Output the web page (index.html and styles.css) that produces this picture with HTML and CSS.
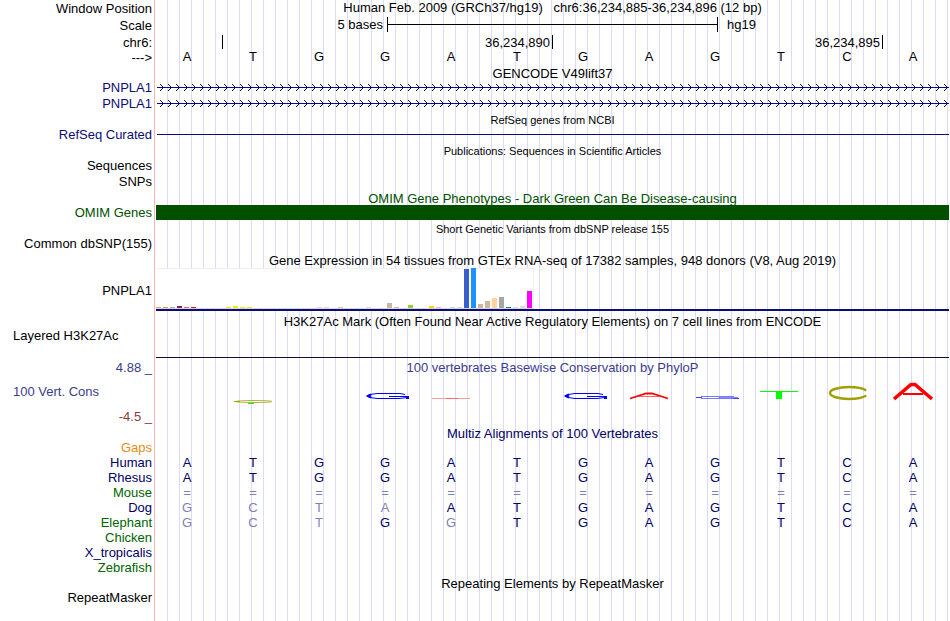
FILE: index.html
```
<!DOCTYPE html>
<html lang="en">
<head>
    <meta charset="UTF-8">
    <meta name="viewport" content="width=device-width, initial-scale=1.0">
    <title>chr6:36,234,885-36,234,896</title>
    <link rel="stylesheet" href="styles.css">
</head>
<body>

<main class="browser">
    <div class="row position">
        <div class="label low">Window Position</div>
        <div class="data center">Human Feb. 2009 (GRCh37/hg19) &nbsp; chr6:36,234,885-36,234,896 (12 bp)</div>
    </div>
    <div class="row scale">
        <div class="label low">Scale</div>
        <div class="data scale-data">
            <span class="scale-left">5 bases</span>
            <span class="scale-bar"></span>
            <span class="scale-right">hg19</span>
        </div>
    </div>
    <div class="row ruler">
        <div class="label">chr6:</div>
        <div class="data ruler-data">
            <span class="tick"></span>
            <span class="tick">36,234,890</span>
            <span class="tick">36,234,895</span>
        </div>
    </div>
    <div class="row sequence">
        <div class="label low">---&gt;</div>
        <div class="data bases" data-seq="ATGGATGAGTCA"></div>
    </div>

    <div class="row title"><div class="label"></div><div class="data center">GENCODE V49lift37</div></div>
    <div class="row blue">
        <div class="label">PNPLA1</div>
        <div class="data"><svg class="gene" height="16"><rect x="1" width="100%" height="16" fill="url(#arrows)"/></svg></div>
    </div>
    <div class="row blue">
        <div class="label">PNPLA1</div>
        <div class="data"><svg class="gene" height="16"><rect x="1" width="100%" height="16" fill="url(#arrows)"/></svg></div>
    </div>

    <div class="row title small"><div class="label"></div><div class="data center">RefSeq genes from NCBI</div></div>
    <div class="row blue">
        <div class="label">RefSeq Curated</div>
        <div class="data"><div class="intron"></div></div>
    </div>

    <div class="row title small"><div class="label"></div><div class="data center">Publications: Sequences in Scientific Articles</div></div>
    <div class="row"><div class="label">Sequences</div></div>
    <div class="row"><div class="label">SNPs</div></div>

    <div class="row title omim"><div class="label"></div><div class="data center">OMIM Gene Phenotypes - Dark Green Can Be Disease-causing</div></div>
    <div class="row omim">
        <div class="label">OMIM Genes</div>
        <div class="data"><div class="omim-bar"></div></div>
    </div>

    <div class="row title small"><div class="label"></div><div class="data center">Short Genetic Variants from dbSNP release 155</div></div>
    <div class="row"><div class="label">Common dbSNP(155)</div></div>

    <div class="row title"><div class="label"></div><div class="data center">Gene Expression in 54 tissues from GTEx RNA-seq of 17382 samples, 948 donors (V8, Aug 2019)</div></div>
    <div class="row gtex">
        <div class="label">PNPLA1</div>
        <div class="data"><div class="chart" id="gtexChart"></div><div class="gene-model"></div></div>
    </div>

    <div class="row title"><div class="label"></div><div class="data center">H3K27Ac Mark (Often Found Near Active Regulatory Elements) on 7 cell lines from ENCODE</div></div>
    <div class="row layered">
        <div class="label left">Layered H3K27Ac</div>
        <div class="data"></div>
    </div>

    <div class="row title phylop"><div class="label">4.88 _</div><div class="data center">100 vertebrates Basewise Conservation by PhyloP</div></div>
    <div class="row cons phylop">
        <div class="label cons-label">
            <span class="cons-name">100 Vert. Cons</span>
            <span class="cons-min">-4.5 _</span>
        </div>
        <div class="data logos">
            <span></span>
            <svg width="48" height="24" role="img" aria-label="C"><ellipse cx="24" cy="19.5" rx="18" ry="1" fill="none" stroke="#b4b440"/><rect x="4" y="19" width="6" height="1" fill="#a0a000"/><rect x="18" y="21" width="6" height="1" fill="#00ff00"/></svg>
            <span></span>
            <svg width="48" height="24" role="img" aria-label="G"><use href="#logoG"/></svg>
            <svg width="48" height="24" role="img" aria-label="A"><rect x="4" y="16" width="38" height="1" fill="#ff9c9c"/><rect x="18" y="16" width="12" height="1" fill="#ff6c6c"/></svg>
            <span></span>
            <svg width="48" height="24" role="img" aria-label="G"><use href="#logoG"/></svg>
            <svg width="48" height="24" role="img" aria-label="A"><g stroke="#ff0000" fill="none"><polyline points="4,16.5 20,11.5 26,11.5 42,16.5" stroke-width="1.8"/><line x1="13" y1="14.5" x2="33" y2="14.5" stroke-opacity="0.6"/></g></svg>
            <svg width="48" height="24" role="img" aria-label="G"><g fill="#4040ff"><rect x="9" y="14" width="33" height="1" opacity="0.7"/><rect x="4" y="15" width="6" height="1"/><rect x="27" y="15" width="19" height="1" opacity="0.6"/><rect x="9" y="16" width="33" height="1" opacity="0.7"/><rect x="41" y="16" width="6" height="1"/></g></svg>
            <svg width="48" height="24" role="img" aria-label="T"><g fill="#00ff00"><rect x="2" y="9" width="38" height="1"/><rect x="18" y="9" width="6" height="8"/></g></svg>
            <svg width="48" height="24" role="img" aria-label="C"><ellipse cx="25" cy="11" rx="19" ry="6" fill="none" stroke="#a0a000" stroke-width="2.4" pathLength="100" stroke-dasharray="92 8" stroke-dashoffset="-4"/></svg>
            <svg width="48" height="24" role="img" aria-label="A"><g stroke="#ff0000" fill="none"><polyline points="4,17 21,2.5 25,2.5 42,17" stroke-width="3.6"/><line x1="13" y1="12" x2="33" y2="12" stroke-width="2"/></g></svg>
        </div>
    </div>

    <div class="row title multiz"><div class="label"></div><div class="data center">Multiz Alignments of 100 Vertebrates</div></div>
    <div class="row species gaps"><div class="label">Gaps</div></div>
    <div class="row species"><div class="label">Human</div><div class="data bases" data-seq="ATGGATGAGTCA"></div></div>
    <div class="row species"><div class="label">Rhesus</div><div class="data bases" data-seq="ATGGATGAGTCA"></div></div>
    <div class="row species green"><div class="label">Mouse</div><div class="data bases" data-seq="============"></div></div>
    <div class="row species"><div class="label">Dog</div><div class="data bases" data-seq="gctaATGAGTCA"></div></div>
    <div class="row species green"><div class="label">Elephant</div><div class="data bases" data-seq="gctGgTGAGTCA"></div></div>
    <div class="row species green"><div class="label">Chicken</div></div>
    <div class="row species"><div class="label">X_tropicalis</div></div>
    <div class="row species green"><div class="label">Zebrafish</div></div>

    <div class="row title"><div class="label"></div><div class="data center">Repeating Elements by RepeatMasker</div></div>
    <div class="row"><div class="label">RepeatMasker</div></div>
</main>

<svg class="defs" width="0" height="0">
    <defs>
        <pattern id="arrows" width="8" height="16" patternUnits="userSpaceOnUse">
            <rect y="7" width="8" height="1" fill="#0c0c78"/>
            <g fill="#0c0c78">
                <rect x="4" y="4" width="1" height="1"/><rect x="5" y="5" width="1" height="1"/><rect x="6" y="6" width="1" height="1"/>
                <rect x="6" y="8" width="1" height="1"/><rect x="5" y="9" width="1" height="1"/><rect x="4" y="10" width="1" height="1"/>
            </g>
        </pattern>
        <g id="logoG" fill="none" stroke="#0000ff">
            <polyline points="43,12.5 38,11.5 15,11.5 8,12.5 5,14 8,15.5 15,16.5 37,16.5 45,15.5"/>
            <polyline points="9,12.5 6,14 9,15.5" stroke-width="2"/>
            <line x1="27" y1="14.5" x2="46" y2="14.5"/>
            <line x1="45.5" y1="14" x2="45.5" y2="17" stroke-width="3"/>
        </g>
    </defs>
</svg>

<script>
    // lower case = base differs from the reference genome
    document.querySelectorAll('.bases').forEach(row => {
        row.innerHTML = row.dataset.seq.split('').map(base => {
            const faded = base === '=' || base !== base.toUpperCase();
            return `<span class="${faded ? 'faded' : ''}">${base.toUpperCase()}</span>`;
        }).join('');
    });

    // tissue index: [height, colour]
    const tissues = {
        0: [1, '#f4a95c'], 1: [1, '#ee9a20'], 2: [1, '#8fbc9f'], 3: [2, '#8b1c62'],
        4: [1, '#ee6a50'], 5: [1, '#e01010'], 10: [1, '#eeee00'], 11: [2, '#eeee00'],
        12: [1, '#eeee00'], 13: [1, '#eeee00'], 23: [1, '#eed5d2'], 24: [1, '#eed5d2'],
        26: [1, '#e0c8a8'], 30: [1, '#eed5d2'], 33: [5, '#cdb79e'], 34: [1, '#cdb79e'],
        36: [3, '#9acd32'], 39: [2, '#ffd700'], 40: [1, '#ffb6c1'], 42: [1, '#c0e8c0'],
        43: [1, '#d9d9d9'], 44: [39, '#3a5fcd'], 45: [40, '#1e90ff'], 46: [4, '#cdb79e'],
        47: [7, '#cdb79e'], 48: [10, '#ffd39b'], 49: [11, '#a6a6a6'], 50: [1, '#008b45'],
        51: [1, '#eed5d2'], 52: [2, '#eed5d2'], 53: [17, '#ff00ff']
    };

    let bars = '';
    for (let i = 0; i < 54; i++) {
        const [height, color] = tissues[i] || [0, 'transparent'];
        bars += `<div class="bar" style="height: ${height}px; background: ${color}"></div>`;
    }
    document.getElementById('gtexChart').innerHTML = bars;
</script>

</body>
</html>
```
FILE: styles.css
```
body {
    margin: 0;
    background: white;
    font-family: "Liberation Sans", Arial, sans-serif;
    font-size: 13px;
    line-height: 16px;
    color: #000;
}
.browser {
    min-height: 100vh;
    margin-right: 1px;
    background:
        linear-gradient(#ffb4b4, #ffb4b4) 154px 0 / 1px 100% no-repeat,
        repeating-linear-gradient(to right, transparent 0 11px, #dcdcfa 11px 12px) 156px 0 / 100% 100% no-repeat;
}
.row {
    display: grid;
    grid-template-columns: 152px 1fr;
    column-gap: 4px;
    height: 16px;
    white-space: nowrap;
}
.label {
    text-align: right;
}
.label.left {
    text-align: left;
    padding-left: 13px;
}
.label.low {
    padding-top: 1px;
}
.center {
    text-align: center;
}
.title {
    height: 15px;
    line-height: 17px;
}
.small {
    font-size: 11px;
}
.blue { color: #0c0c78; }
.omim { color: #005000; }
.phylop { color: #3c3c8c; }
.multiz { color: #000064; }

/* ruler */
.position { height: 17px; }
.scale { height: 18px; }
.ruler { height: 14px; }
.scale-data, .ruler-data, .bases, .logos {
    display: grid;
    padding-right: 1px;
}
.scale-data {
    grid-template-columns: 7fr 10fr 7fr;
}
.scale-left {
    text-align: right;
    padding-right: 4px;
}
.scale-bar {
    height: 15px;
    margin-right: -1px;
    border-left: 1px solid #000;
    border-right: 1px solid #000;
    background: linear-gradient(#000, #000) 0 7px / 100% 1px no-repeat;
}
.scale-right {
    padding-left: 10px;
}
.ruler-data {
    grid-template-columns: 1fr 5fr 5fr 1fr;
}
.tick {
    height: 14px;
    margin-right: -1px;
    padding-right: 2px;
    border-right: 1px solid #000;
    text-align: right;
}
.bases, .logos {
    grid-template-columns: repeat(12, 1fr);
}
.bases span {
    padding-right: 4px;
    text-align: center;
}
.faded {
    color: #8080b4;
}

/* gene tracks */
.gene {
    display: block;
    width: 100%;
}
.intron {
    height: 1px;
    margin: 7px 0 0 1px;
    background: #0c0c78;
}
.omim-bar {
    height: 15px;
    background: #005000;
}

/* expression chart */
.gtex {
    height: 46px;
}
.gtex .label {
    padding-top: 16px;
}
.gtex .data {
    padding-top: 1px;
}
.chart {
    box-sizing: border-box;
    display: flex;
    align-items: flex-end;
    gap: 2px;
    width: 378px;
    height: 41px;
    border-top: 1px solid #f0f0f0;
    border-right: 1px solid #f0f0f0;
    border-bottom: 1px solid #d8d8d8;
    background: white;
}
.bar {
    flex: none;
    width: 5px;
}
.gene-model {
    height: 2px;
    background: #0c0c78;
}

/* conservation */
.layered {
    height: 31px;
}
.layered .data {
    height: 29px;
    border-bottom: 1px solid #101030;
}
.cons {
    height: 51px;
}
.cons-label {
    display: flex;
    flex-direction: column;
    justify-content: space-between;
    padding-top: 10px;
}
.cons-name {
    text-align: left;
    padding-left: 13px;
}
.cons-min {
    color: #8c3c3c;
}
.logos {
    justify-items: center;
    padding-top: 8px;
}
.logos svg {
    margin-right: 3px;
}

/* alignments */
.species {
    height: 15px;
    line-height: 15px;
    color: #000064;
}
.gaps .label { color: #e68c14; }
.green .label { color: #006400; }
.defs {
    position: absolute;
}
```
